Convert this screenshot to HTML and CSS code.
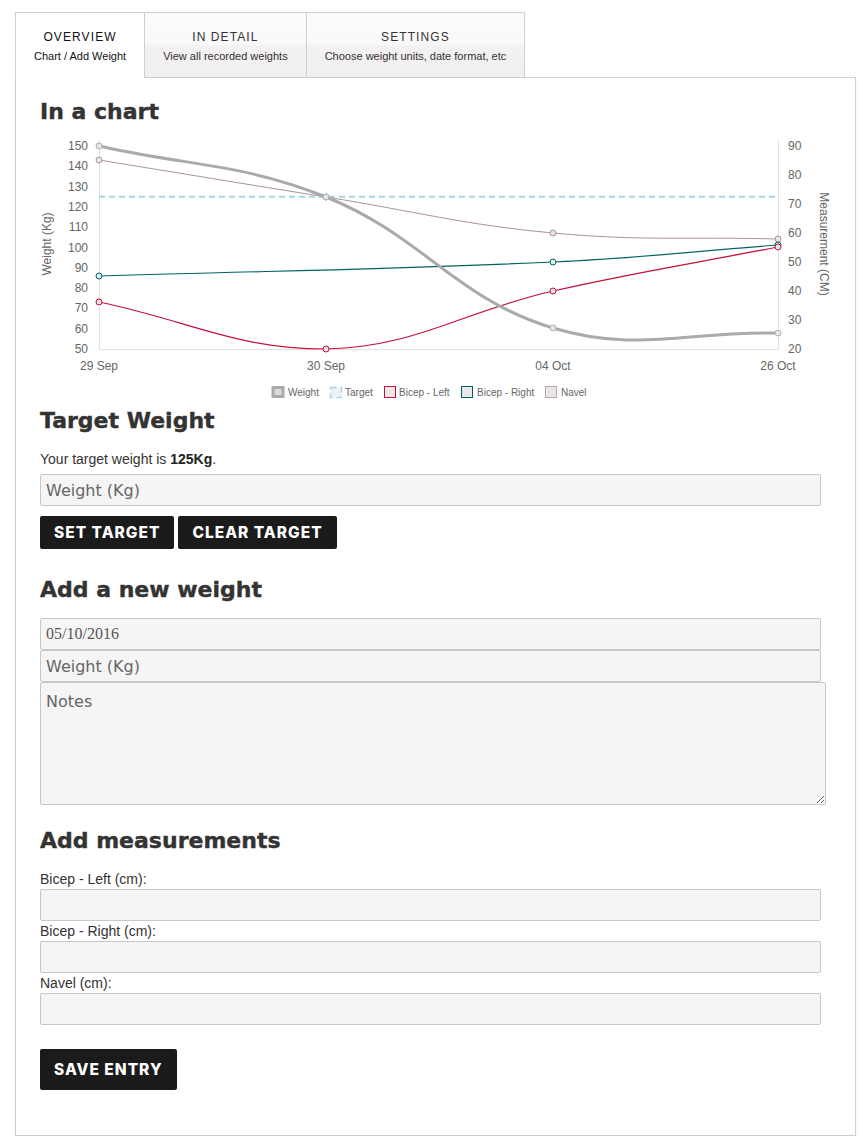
FILE: index.html
```html
<!DOCTYPE html>
<html>
<head>
<meta charset="utf-8">
<title>Weight Tracker</title>
<link rel="stylesheet" href="styles.css">
</head>
<body>
<div class="app">
  <nav class="tabs">
    <a class="tab active"><span class="tab-title">OVERVIEW</span><span class="tab-sub">Chart / Add Weight</span></a>
    <a class="tab"><span class="tab-title">IN DETAIL</span><span class="tab-sub">View all recorded weights</span></a>
    <a class="tab"><span class="tab-title">SETTINGS</span><span class="tab-sub">Choose weight units, date format, etc</span></a>
  </nav>
  <main class="panel">
    <h2 class="heading">In a chart</h2>
    <svg class="chart" width="790" height="270" viewBox="40 134 790 270" xmlns="http://www.w3.org/2000/svg">
      <g class="axis-lines" stroke="#e2e2e2" stroke-width="1" fill="none">
        <line x1="99.5" y1="140" x2="99.5" y2="349.5"/>
        <line x1="778.5" y1="140" x2="778.5" y2="349.5"/>
        <line x1="99" y1="349.5" x2="779" y2="349.5"/>
      </g>
      <g class="ticks" font-family="Liberation Sans, Arial, sans-serif" font-size="12" fill="#666">
        <g text-anchor="end">
          <text x="88" y="150">150</text>
          <text x="88" y="170.3">140</text>
          <text x="88" y="190.6">130</text>
          <text x="88" y="210.9">120</text>
          <text x="88" y="231.2">110</text>
          <text x="88" y="251.5">100</text>
          <text x="88" y="271.8">90</text>
          <text x="88" y="292.1">80</text>
          <text x="88" y="312.4">70</text>
          <text x="88" y="332.7">60</text>
          <text x="88" y="353">50</text>
        </g>
        <g text-anchor="start">
          <text x="788" y="150">90</text>
          <text x="788" y="179">80</text>
          <text x="788" y="208">70</text>
          <text x="788" y="237">60</text>
          <text x="788" y="266">50</text>
          <text x="788" y="295">40</text>
          <text x="788" y="324">30</text>
          <text x="788" y="353">20</text>
        </g>
        <g text-anchor="middle">
          <text x="99" y="370">29 Sep</text>
          <text x="326" y="370">30 Sep</text>
          <text x="553" y="370">04 Oct</text>
          <text x="778" y="370">26 Oct</text>
        </g>
        <text text-anchor="middle" transform="translate(50.5 244) rotate(-90)">Weight (Kg)</text>
        <text text-anchor="middle" transform="translate(820 244) rotate(90)">Measurement (CM)</text>
      </g>
      <line x1="99" y1="196.7" x2="778" y2="196.7" stroke="#a4d4e8" stroke-width="2" stroke-dasharray="6 4"/>
      <path d="M99,160 C189.8,174.8 235.2,182.4 326,197 C416.8,211.6 461.7,224.5 553,233 C642.5,241.3 688,236.6 778,239" fill="none" stroke="#a89494" stroke-width="1"/>
      <path d="M99,276 C280.6,270.4 371.7,270.3 553,262 C643.3,257.9 688,251.8 778,245" fill="none" stroke="#006363" stroke-width="1.2"/>
      <path d="M99,302 C189.8,320.8 235.7,349 326,349 C417.3,346.8 461.7,311.6 553,291 C642.5,270.8 688,264.6 778,247" fill="none" stroke="#c4103a" stroke-width="1.2"/>
      <path d="M99,146 C189.8,166.4 240.6,162.8 326,197 C422.2,235.6 455.8,298.8 553,328 C636.6,353.2 688,331 778,333" fill="none" stroke="#aaaaaa" stroke-width="3"/>
      <g class="points" fill="#e6e6e6" stroke-width="1">
        <g stroke="#a89494">
          <circle cx="99" cy="160" r="3"/><circle cx="326" cy="197" r="3"/><circle cx="553" cy="233" r="3"/><circle cx="778" cy="239" r="3"/>
        </g>
        <g stroke="#006363">
          <circle cx="99" cy="276" r="3"/><circle cx="553" cy="262" r="3"/><circle cx="778" cy="245" r="3"/>
        </g>
        <g stroke="#c4103a">
          <circle cx="99" cy="302" r="3"/><circle cx="326" cy="349" r="3"/><circle cx="553" cy="291" r="3"/><circle cx="778" cy="247" r="3"/>
        </g>
        <g stroke="#b0b0b0">
          <circle cx="99" cy="146" r="3"/><circle cx="326" cy="197" r="3"/><circle cx="553" cy="328" r="3"/><circle cx="778" cy="333" r="3"/>
        </g>
      </g>
      <g class="legend" font-family="Liberation Sans, Arial, sans-serif" font-size="10" fill="#666">
        <rect x="273" y="387.5" width="10" height="9" fill="#dcdcdc" stroke="#aaaaaa" stroke-width="3"/>
        <text x="288" y="396">Weight</text>
        <rect x="330.5" y="387.5" width="11" height="10" fill="#eef0f2" stroke="#a4d4e8" stroke-width="1.5" stroke-dasharray="6 4"/>
        <text x="345" y="396">Target</text>
        <rect x="384.5" y="386.5" width="11" height="11" fill="#e8e8e8" stroke="#c4103a" stroke-width="1"/>
        <text x="399" y="396">Bicep - Left</text>
        <rect x="461.5" y="386.5" width="11" height="11" fill="#e8e8e8" stroke="#006363" stroke-width="1"/>
        <text x="477" y="396">Bicep - Right</text>
        <rect x="545.5" y="386.5" width="11" height="11" fill="#e8e8e8" stroke="#b8a8a8" stroke-width="1"/>
        <text x="561" y="396">Navel</text>
      </g>
    </svg>

    <h2 class="heading heading-target">Target Weight</h2>
    <p class="target-text">Your target weight is <b>125Kg</b>.</p>
    <input class="field field-target" type="text" placeholder="Weight (Kg)">
    <div class="btn-row">
      <button class="btn">SET TARGET</button>
      <button class="btn">CLEAR TARGET</button>
    </div>

    <h2 class="heading heading-new">Add a new weight</h2>
    <div class="stack">
      <input class="field field-date" type="text" value="05/10/2016">
      <input class="field" type="text" placeholder="Weight (Kg)">
      <textarea class="notes" placeholder="Notes"></textarea>
    </div>

    <h2 class="heading heading-measure">Add measurements</h2>
    <div class="measures">
      <label class="m-label">Bicep - Left (cm):</label>
      <input class="field" type="text">
      <label class="m-label">Bicep - Right (cm):</label>
      <input class="field" type="text">
      <label class="m-label">Navel (cm):</label>
      <input class="field" type="text">
    </div>
    <button class="btn btn-save">SAVE ENTRY</button>
  </main>
</div>
</body>
</html>
```

FILE: styles.css
```css
* { box-sizing: border-box; }

html, body {
  margin: 0;
  padding: 0;
  background: #fff;
}

body {
  font-family: "Liberation Sans", Arial, sans-serif;
  color: #333;
  font-size: 14px;
}

.app {
  width: 841px;
  margin: 12px 0 0 15px;
}

.tabs {
  display: flex;
  align-items: flex-end;
}

.tab {
  display: flex;
  flex-direction: column;
  align-items: center;
  padding: 16px 18px 13px;
  border: 1px solid #cfcfcf;
  border-bottom: none;
  background: linear-gradient(#fdfcfc 0%, #faf9f9 48%, #f3f1f1 52%, #f0eeee 100%);
  margin-left: -1px;
  cursor: pointer;
}

.tab:first-child { margin-left: 0; }

.tab.active {
  background: #fff;
  position: relative;
  z-index: 1;
  margin-bottom: -1px;
  padding-bottom: 14px;
}

.tab-title {
  font-size: 12px;
  line-height: 16px;
  letter-spacing: 1.1px;
  color: #333;
}

.tab.active .tab-title { color: #111; }

.tab-sub {
  margin-top: 3px;
  font-size: 11px;
  line-height: 16px;
  color: #333;
}

.tab.active .tab-sub { color: #111; }

.panel {
  display: block;
  border: 1px solid #cfcfcf;
  padding: 19px 24px 45px;
  box-shadow: 0 1px 2px rgba(0, 0, 0, 0.08);
}

.heading {
  margin: 0;
  font-family: "DejaVu Sans", "Liberation Sans", Arial, sans-serif;
  font-weight: 700;
  font-size: 22px;
  line-height: 30px;
  color: #333;
  -webkit-text-stroke: 0.4px #333;
}

.chart {
  display: block;
  margin-top: 7px;
}

.heading-target { margin-top: 2px; }

.target-text {
  margin: 13px 0 0;
  line-height: 20px;
  font-size: 14px;
  color: #333;
}

.target-text b { color: #222; }

.field {
  display: block;
  width: 781px;
  height: 32px;
  margin: 0;
  padding: 0 5px;
  border: 1px solid #c8c8c8;
  border-radius: 2px;
  background: #f5f5f5;
  font-family: "DejaVu Sans", "Liberation Sans", sans-serif;
  font-size: 16px;
  color: #555;
  outline: none;
}

.field::placeholder,
.notes::placeholder {
  color: #666;
  opacity: 1;
}

.field-target { margin-top: 5px; }

.field-date {
  font-family: "Liberation Serif", "DejaVu Serif", serif;
  font-size: 16px;
  color: #555;
}

.btn-row {
  display: flex;
  gap: 4px;
  margin-top: 10px;
}

.btn {
  display: block;
  height: 33px;
  padding: 0 14px;
  border: none;
  border-radius: 2px;
  background: #1b1b1b;
  color: #fff;
  font-family: Inter, "Open Sans", sans-serif;
  font-weight: 800;
  font-size: 15.5px;
  letter-spacing: 1px;
  cursor: pointer;
}

.heading-new { margin-top: 26px; }

.stack {
  margin-top: 13px;
}

.notes {
  display: block;
  width: 786px;
  height: 123px;
  margin: 0;
  padding: 9px 5px;
  border: 1px solid #c8c8c8;
  border-radius: 2px;
  background: #f5f5f5;
  font-family: "DejaVu Sans", "Liberation Sans", sans-serif;
  font-size: 16px;
  color: #555;
  outline: none;
}

.heading-measure { margin-top: 21px; }

.measures {
  display: flex;
  flex-direction: column;
  margin-top: 13px;
}

.m-label {
  display: block;
  font-size: 14px;
  line-height: 20px;
  color: #333;
}

.btn-save {
  margin-top: 24px;
  height: 41px;
}
```
